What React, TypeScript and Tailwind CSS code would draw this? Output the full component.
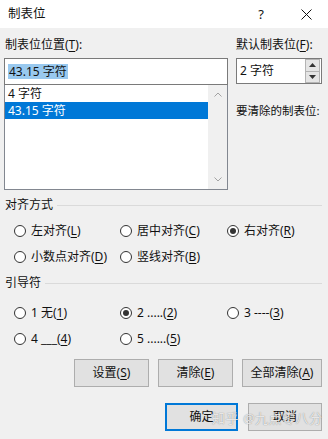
import React from "react";

const font = { fontFamily: '"Noto Sans", "Noto Sans CJK SC", sans-serif' };

function U({ children }: { children: React.ReactNode }) {
  return <span className="underline underline-offset-2 decoration-1">{children}</span>;
}

function Radio({ checked, children, w }: { checked?: boolean; children: React.ReactNode; w: string }) {
  return (
    <div className={`flex items-center h-[16px] ${w}`}>
      <span className="w-[12px] h-[12px] rounded-full border border-[#333] bg-white flex items-center justify-center shrink-0">
        {checked && <span className="w-[6px] h-[6px] rounded-full bg-[#333]" />}
      </span>
      <span className="ml-[5px] whitespace-nowrap">{children}</span>
    </div>
  );
}

function Group({ label }: { label: string }) {
  return (
    <div className="flex items-center h-[16px] pl-[5px] pr-[6px]">
      <span>{label}</span>
      <span className="flex-1 ml-[4px] border-t border-[#dadada]" />
    </div>
  );
}

function Btn({ children, w, primary }: { children: React.ReactNode; w: string; primary?: boolean }) {
  return (
    <div
      className={`${w} h-[28px] flex items-center justify-center bg-[#e1e1e1] ${
        primary ? "border-2 border-[#0078d7]" : "border border-[#adadad]"
      }`}
    >
      {children}
    </div>
  );
}

export default function App() {
  return (
    <div className="w-[328px] h-[439px] bg-[#f0f0f0] text-[12px] leading-[16px] text-[#111] relative overflow-hidden" style={font}>
      {/* Title bar */}
      <div className="h-[28px] bg-white flex items-center pl-[8px]">
        <span className="text-[12.5px]">制表位</span>
        <span className="ml-auto mr-[37px] text-[13px]">?</span>
        <svg width="11" height="11" viewBox="0 0 11 11" className="mr-[16px]">
          <path d="M0.5 0.5L10.5 10.5M10.5 0.5L0.5 10.5" stroke="#111" strokeWidth="1" />
        </svg>
      </div>

      {/* Tab position + default */}
      <div className="flex mt-[9px]">
        <div className="ml-[4px] w-[224px]">
          <div className="pl-[1px] whitespace-nowrap">
            制表位位置(<U>T</U>):
          </div>
          <div className="mt-[5px] h-[27px] border border-[#7a7a7a] bg-white flex items-center pl-[3px]">
            <span className="bg-[#99c9ef] px-[1px] leading-[15px]">43.15 字符</span>
          </div>
          <div className="h-[105px] border border-[#828790] border-t-0 bg-white flex">
            <div className="flex-1">
              <div className="h-[17px] pl-[3px] flex items-center">4 字符</div>
              <div className="h-[17px] pl-[3px] flex items-center bg-[#0078d7] text-white">43.15 字符</div>
            </div>
            <div className="w-[19px] bg-[#f0f0f0] flex flex-col items-center justify-between py-[7px]">
              <svg width="8" height="5" viewBox="0 0 8 5">
                <path d="M0.5 4.5L4 1L7.5 4.5" stroke="#a3a3a3" fill="none" />
              </svg>
              <svg width="8" height="5" viewBox="0 0 8 5">
                <path d="M0.5 0.5L4 4L7.5 0.5" stroke="#a3a3a3" fill="none" />
              </svg>
            </div>
          </div>
        </div>

        <div className="ml-[8px] w-[86px]">
          <div className="whitespace-nowrap">
            默认制表位(<U>F</U>):
          </div>
          <div className="mt-[5px] h-[26px] border border-[#7a7a7a] bg-white flex items-center pl-[3px]">
            <span className="flex-1">2 字符</span>
            <div className="w-[15px] h-[24px] flex flex-col mr-[1px]">
              <div className="flex-1 bg-[#e5e5e5] border border-[#b4b4b4] flex items-center justify-center">
                <svg width="7" height="4" viewBox="0 0 7 4">
                  <path d="M0 4L3.5 0L7 4Z" fill="#333" />
                </svg>
              </div>
              <div className="flex-1 bg-[#e5e5e5] border border-[#b4b4b4] border-t-0 flex items-center justify-center">
                <svg width="7" height="4" viewBox="0 0 7 4">
                  <path d="M0 0L3.5 4L7 0Z" fill="#333" />
                </svg>
              </div>
            </div>
          </div>
          <div className="mt-[19px] whitespace-nowrap text-[11.5px]">要清除的制表位:</div>
        </div>
      </div>

      {/* Alignment */}
      <div className="mt-[7px]">
        <Group label="对齐方式" />
      </div>
      <div className="pl-[14px] mt-[10px] flex">
        <Radio w="w-[106px]">
          左对齐(<U>L</U>)
        </Radio>
        <Radio w="w-[107px]">
          居中对齐(<U>C</U>)
        </Radio>
        <Radio checked w="w-[90px]">
          右对齐(<U>R</U>)
        </Radio>
      </div>
      <div className="pl-[14px] mt-[10px] flex">
        <Radio w="w-[106px]">
          小数点对齐(<U>D</U>)
        </Radio>
        <Radio w="w-[107px]">
          竖线对齐(<U>B</U>)
        </Radio>
      </div>

      {/* Leader */}
      <div className="mt-[10px]">
        <Group label="引导符" />
      </div>
      <div className="pl-[14px] mt-[14px] flex">
        <Radio w="w-[106px]">
          1 无(<U>1</U>)
        </Radio>
        <Radio checked w="w-[107px]">
          2 .....(<U>2</U>)
        </Radio>
        <Radio w="w-[90px]">
          3 ----(<U>3</U>)
        </Radio>
      </div>
      <div className="pl-[14px] mt-[10px] flex">
        <Radio w="w-[106px]">
          4 ___(<U>4</U>)
        </Radio>
        <Radio w="w-[107px]">
          5 ......(<U>5</U>)
        </Radio>
      </div>

      {/* Buttons */}
      <div className="mt-[12px] flex justify-end pr-[6px] gap-[9px]">
        <Btn w="w-[75px]">
          设置(<U>S</U>)
        </Btn>
        <Btn w="w-[75px]">
          清除(<U>E</U>)
        </Btn>
        <Btn w="w-[80px]">
          全部清除(<U>A</U>)
        </Btn>
      </div>
      <div className="mt-[16px] flex justify-end pr-[6px] gap-[10px]">
        <Btn w="w-[73px]" primary>
          确定
        </Btn>
        <Btn w="w-[74px]">
          取消
        </Btn>
      </div>

      {/* Watermark */}
      <div className="absolute left-[212px] top-[410px] text-[13px] text-white/80 tracking-[0.5px]" style={{ textShadow: "0 0 1px rgba(0,0,0,0.5)" }}>
        知乎 @九点零八分
      </div>
    </div>
  );
}
